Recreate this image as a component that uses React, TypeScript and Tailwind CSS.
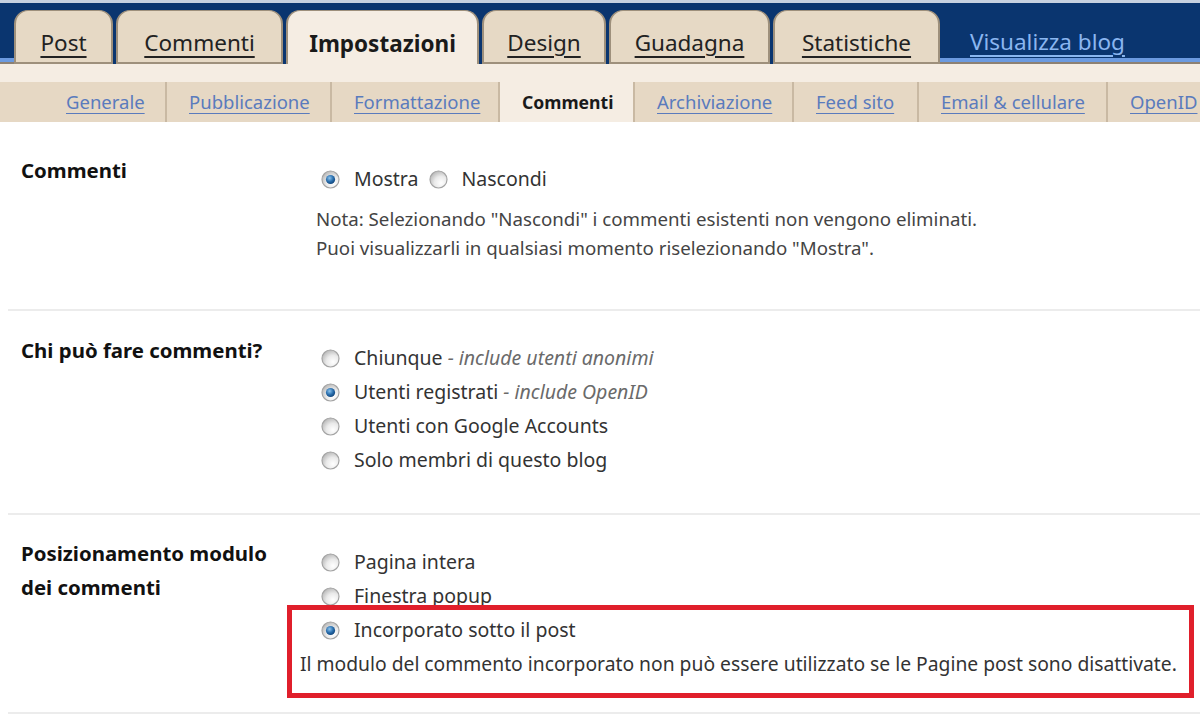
import type { ReactNode } from 'react';

const tabs = [
  { label: 'Post', w: 'w-[99px]' },
  { label: 'Commenti', w: 'w-[167px]' },
  { label: 'Impostazioni', w: 'w-[193px]', active: true },
  { label: 'Design', w: 'w-[124px]' },
  { label: 'Guadagna', w: 'w-[161px]' },
  { label: 'Statistiche', w: 'w-[167px]' },
];

const subTabs = [
  { label: 'Generale', w: 'w-[123px]' },
  { label: 'Pubblicazione', w: 'w-[165px]' },
  { label: 'Formattazione', w: 'w-[168px]' },
  { label: 'Commenti', w: 'w-[135px]', active: true },
  { label: 'Archiviazione', w: 'w-[159px]' },
  { label: 'Feed sito', w: 'w-[125px]' },
  { label: 'Email & cellulare', w: 'w-[189px]' },
  { label: 'OpenID', w: 'flex-1', last: true },
];

const Radio = ({ checked, className = 'ml-[5px]' }: { checked?: boolean; className?: string }) => (
  <svg width="19" height="19" viewBox="0 0 19 19" className={`${className} shrink-0`}>
    <defs>
      <radialGradient id="rb" cx="65%" cy="70%" r="70%">
        <stop offset="0%" stopColor="#ffffff" />
        <stop offset="55%" stopColor="#eaeaea" />
        <stop offset="100%" stopColor="#bdbdbd" />
      </radialGradient>
      <radialGradient id="rd" cx="40%" cy="35%" r="70%">
        <stop offset="0%" stopColor="#8cc4ee" />
        <stop offset="55%" stopColor="#2a6fae" />
        <stop offset="100%" stopColor="#0d3f74" />
      </radialGradient>
    </defs>
    <circle cx="9.5" cy="9.5" r="8.5" fill="url(#rb)" stroke="#a4a4a4" strokeWidth="1.2" />
    {checked && <circle cx="9.5" cy="9.5" r="4.6" fill="url(#rd)" />}
  </svg>
);

const Option = ({ checked, children }: { checked?: boolean; children: ReactNode }) => (
  <div className="flex h-[34px] items-center gap-[14px] whitespace-nowrap">
    <Radio checked={checked} />
    <span>{children}</span>
  </div>
);

const Hint = ({ children }: { children: ReactNode }) => (
  <span className="italic text-[#6a6a6a]">{children}</span>
);

const App = () => {
  return (
    <div className="min-h-[716px] w-[1200px] overflow-hidden bg-white font-['Noto_Sans',sans-serif] text-[#333]">
      {/* barra principale */}
      <div className="flex h-[64px] items-end border-t-[3px] border-[#c7d1e0] bg-[#0a356f]">
        <div className="h-[6px] w-[14px] border-t-4 border-b-2 border-t-[#6b9ae0] border-b-[#8d8173]" />
        <div className="flex items-end gap-[3px]">
          {tabs.map((t) =>
            t.active ? (
              <div
                key={t.label}
                className={`${t.w} flex h-[54px] items-center justify-center rounded-t-[14px] border-x-2 border-t border-[#9e907c] bg-[#f5ede3] pt-[12px] text-[22.5px] font-bold text-[#1a1a1a]`}
              >
                {t.label}
              </div>
            ) : (
              <div
                key={t.label}
                className={`${t.w} flex h-[54px] items-center justify-center rounded-t-[14px] border-x-2 border-t border-b-2 border-[#9e907c] bg-[#e6d9c5] pt-[12px] text-[22.5px] text-[#222] underline underline-offset-[5px]`}
              >
                {t.label}
              </div>
            ),
          )}
        </div>
        <div className="flex h-full flex-1 items-end border-b-2 border-[#8d8173]">
          <div className="flex h-full w-full items-center border-b-4 border-[#6b9ae0] pl-[30px] pt-[22px] text-[22.5px] text-[#8ab6f0] underline underline-offset-[5px]">
            Visualizza blog
          </div>
        </div>
      </div>

      {/* striscia crema */}
      <div className="h-[18px] bg-[#f5ede3]" />

      {/* sotto-schede */}
      <div className="flex h-[40px] bg-[#e6d8c4] pl-[44px] text-[18.5px] whitespace-nowrap">
        {subTabs.map((s) =>
          s.active ? (
            <div
              key={s.label}
              className={`${s.w} flex shrink-0 items-center border-r-2 border-[#c9b9a3] bg-[#f5ede3] pl-[22px] text-[17.6px] font-bold text-[#1a1a1a]`}
            >
              {s.label}
            </div>
          ) : (
            <div
              key={s.label}
              className={`${s.w} flex shrink-0 items-center pl-[22px] text-[#5a7bbd] ${
                s.last ? '' : 'border-r-2 border-[#c9b9a3]'
              }`}
            >
              <span className="underline underline-offset-[4px]">{s.label}</span>
            </div>
          ),
        )}
      </div>

      {/* Commenti */}
      <div className="ml-[8px] flex border-b-2 border-[#ececec] pt-[31px] pb-[47px]">
        <div className="w-[308px] shrink-0 pl-[13px] text-[20.4px] leading-[34px] font-bold text-[#111]">Commenti</div>
        <div className="mt-[9px] flex-1 text-[19.5px]">
          <div className="flex h-[34px] items-center gap-[14px]">
            <Radio checked />
            <span>Mostra</span>
            <Radio className="-ml-[3px]" />
            <span className="-ml-[1px]">Nascondi</span>
          </div>
          <div className="mt-[8px] text-[18.7px] leading-[29px] text-[#444]">
            <p>Nota: Selezionando "Nascondi" i commenti esistenti non vengono eliminati.</p>
            <p>Puoi visualizzarli in qualsiasi momento riselezionando "Mostra".</p>
          </div>
        </div>
      </div>

      {/* Chi può fare commenti */}
      <div className="ml-[8px] flex border-b-2 border-[#ececec] pt-[22px] pb-[36px]">
        <div className="w-[308px] shrink-0 pl-[13px] text-[20.4px] leading-[34px] font-bold text-[#111]">
          Chi può fare commenti?
        </div>
        <div className="mt-[8px] flex-1 text-[19.5px]">
          <Option>
            Chiunque <Hint>- include utenti anonimi</Hint>
          </Option>
          <Option checked>
            Utenti registrati <Hint>- include OpenID</Hint>
          </Option>
          <Option>Utenti con Google Accounts</Option>
          <Option>Solo membri di questo blog</Option>
        </div>
      </div>

      {/* Posizionamento modulo */}
      <div className="ml-[8px] flex border-b-2 border-[#ececec] pt-[21px] pb-[14px]">
        <div className="w-[308px] shrink-0 pl-[13px] text-[20.4px] leading-[34px] font-bold text-[#111]">
          Posizionamento modulo
          <br />
          dei commenti
        </div>
        <div className="mt-[9px] flex-1 text-[19.5px]">
          <Option>Pagina intera</Option>
          <Option>Finestra popup</Option>
          <div className="relative -mt-[8px] mr-[6px] -ml-[29px] border-[5px] border-[#e01f2b] bg-white pt-[3px] pb-[12px] pl-[24px]">
            <Option checked>Incorporato sotto il post</Option>
            <p className="-ml-[16px] text-[19.3px] leading-[34px] whitespace-nowrap text-[#333]">
              Il modulo del commento incorporato non può essere utilizzato se le Pagine post sono disattivate.
            </p>
          </div>
        </div>
      </div>
    </div>
  );
};

export default App;
